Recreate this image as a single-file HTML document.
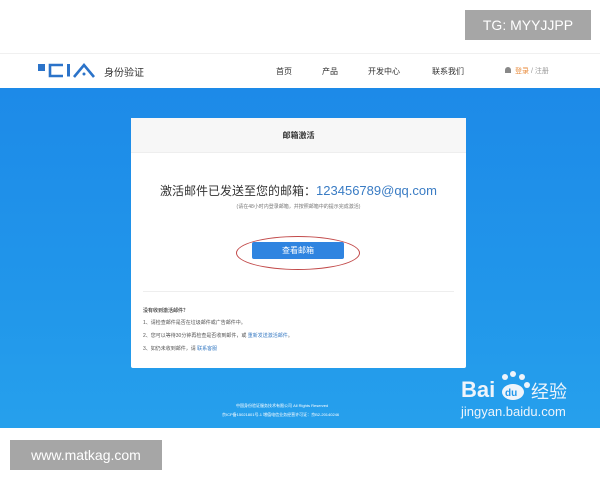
<!DOCTYPE html>
<html><head><meta charset="utf-8"><style>
*{margin:0;padding:0;box-sizing:border-box}
body{width:600px;height:480px;background:#fff;font-family:"Liberation Sans","Noto Sans CJK SC",sans-serif;position:relative;overflow:hidden}
.abs{position:absolute}
.tg{left:465px;top:10px;width:126px;height:30px;background:#a6a6a6;color:#fff;font-size:14px;line-height:30px;text-align:center}
.hdr{left:0;top:53px;width:600px;height:35px;background:#fff;border-top:1px solid #f0f0f0}
.blue{left:0;top:88px;width:600px;height:340px;background:linear-gradient(180deg,#1d8ae8,#2196ea 60%,#26a0ec)}
.card{left:131px;top:118px;width:335px;height:250px;background:#fff;border-radius:2px}
.ch{height:35px;background:#f7f7f7;border-bottom:1px solid #eee;text-align:center;font-size:8px;font-weight:bold;line-height:35px;color:#333}
.nav{font-size:8px;color:#333;top:66px}
.wm{left:10px;top:440px;width:152px;height:30px;background:#a6a6a6;color:#fff;font-size:14px;line-height:30px;text-align:center}
.sm{font-size:5px;color:#555;left:12px}
</style></head><body>
<div class="abs tg">TG: MYYJJPP</div>
<div class="abs hdr"></div>
<svg class="abs" style="left:36px;top:60px" width="64" height="20">
<rect x="2" y="4" width="7" height="7" fill="#2b73c9"/>
<path d="M27 5 H14 V16 H27" fill="none" stroke="#2b73c9" stroke-width="2.6"/>
<rect x="31" y="4" width="3" height="12.5" fill="#2b73c9"/>
<path d="M38 17 L48 5 L58 17" fill="none" stroke="#2b73c9" stroke-width="2.6"/>
<circle cx="48" cy="14" r="1.5" fill="#2b73c9"/>
</svg>
<div class="abs" style="left:104px;top:64px;font-size:10px;color:#333">身份验证</div>
<div class="abs nav" style="left:276px">首页</div>
<div class="abs nav" style="left:322px">产品</div>
<div class="abs nav" style="left:368px">开发中心</div>
<div class="abs nav" style="left:432px">联系我们</div>
<div class="abs" style="left:505px;top:67px;width:6px;height:6px;border-radius:3px 3px 0 0;background:#888"></div>
<div class="abs" style="left:515px;top:66px;font-size:7px;color:#e88a3a">登录 <span style="color:#999">/ 注册</span></div>
<div class="abs blue"></div>
<div class="abs card">
<div class="ch">邮箱激活</div>
<div style="text-align:center;margin-top:29px;font-size:12px;color:#333">激活邮件已发送至您的邮箱：<span style="color:#3a7cc4;font-size:13px">123456789@qq.com</span></div>
<div style="text-align:center;margin-top:4px;font-size:5px;color:#777">(请在48小时内登录邮箱，并按照邮箱中的提示完成激活)</div>
<div style="position:absolute;left:121px;top:124px;width:92px;height:17px;background:#2f84e0;border-radius:2px;color:#fff;font-size:8px;text-align:center;line-height:17px">查看邮箱</div>
<div style="position:absolute;left:105px;top:118px;width:124px;height:34px;border:1.5px solid #c24a4a;border-radius:50%"></div>
<div style="position:absolute;left:12px;right:12px;top:173px;border-top:1px solid #eee"></div>
<div class="abs sm" style="top:189px;font-weight:bold">没有收到激活邮件？</div>
<div class="abs sm" style="top:201px">1、请检查邮件是否在垃圾邮件或广告邮件中。</div>
<div class="abs sm" style="top:214px">2、您可以等待30分钟再检查是否收到邮件，或 <span style="color:#3a7cc4">重新发送激活邮件</span>。</div>
<div class="abs sm" style="top:227px">3、如仍未收到邮件，请 <span style="color:#3a7cc4">联系客服</span></div>
</div>
<div class="abs" style="left:236px;top:403px;font-size:4px;color:#fff">中国身份验证服务技术有限公司 All Rights Reserved</div>
<div class="abs" style="left:222px;top:412px;font-size:4px;color:#fff">京ICP备15021801号-1 增值电信业务经营许可证：京B2-20140246</div>
<div class="abs" style="left:461px;top:377px;font-size:22px;font-weight:bold;color:#eef4fb">Bai</div>
<svg class="abs" style="left:497px;top:370px" width="34" height="32"><g fill="#eef4fb"><circle cx="8" cy="7" r="3"/><circle cx="16" cy="4" r="3"/><circle cx="25" cy="7" r="3"/><circle cx="30" cy="15" r="3"/><ellipse cx="16" cy="22" rx="11" ry="8"/></g><text x="8" y="26" font-size="10" font-family="Liberation Sans" fill="#2196ea" font-weight="bold">du</text></svg>
<div class="abs" style="left:531px;top:378px;font-size:18px;color:#eef4fb">经验</div>
<div class="abs" style="left:461px;top:404px;font-size:13px;color:#eef4fb">jingyan.baidu.com</div>
<div class="abs wm">www.matkag.com</div>
</body></html>
